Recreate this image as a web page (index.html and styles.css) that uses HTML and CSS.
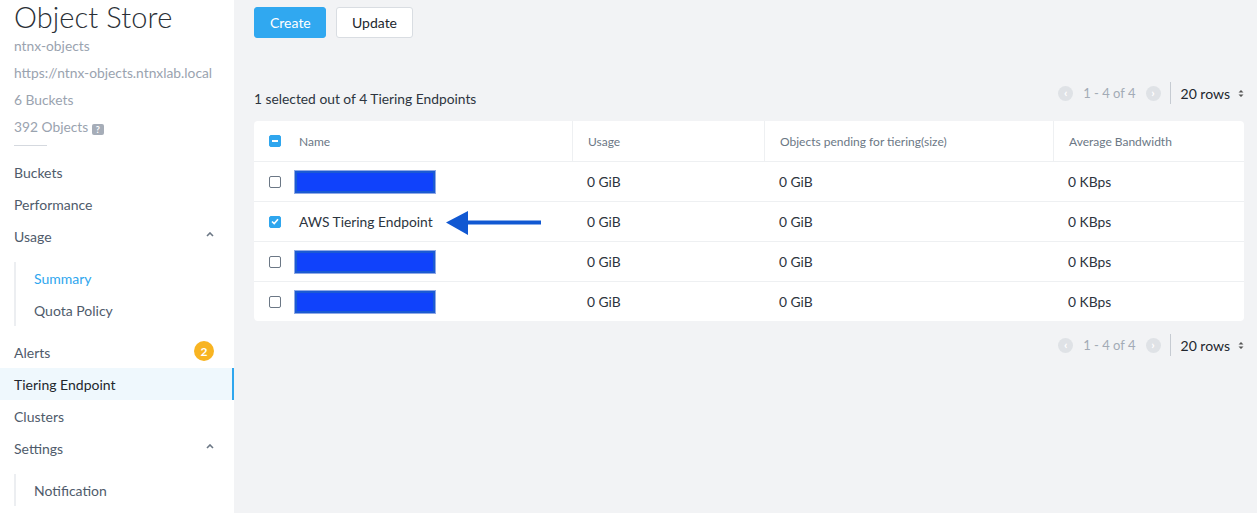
FILE: index.html
```html
<!DOCTYPE html>
<html>
<head>
<meta charset="utf-8">
<link rel="stylesheet" href="styles.css">
</head>
<body>
<div class="app">
  <aside class="sidebar">
    <h1 class="title">Object Store</h1>
    <div class="meta">ntnx-objects</div>
    <div class="meta">https://ntnx-objects.ntnxlab.local</div>
    <div class="meta">6 Buckets</div>
    <div class="meta">392 Objects <span class="help">?</span></div>
    <div class="rule"></div>
    <nav class="nav">
      <div class="nav-item">Buckets</div>
      <div class="nav-item">Performance</div>
      <div class="nav-item">Usage <span class="chev"><svg width="8" height="5" viewBox="0 0 8 5"><path d="M1 4 L4 1 L7 4" fill="none" stroke="#6b7785" stroke-width="1.6"/></svg></span></div>
      <div class="sub">
        <div class="sub-item active-sub">Summary</div>
        <div class="sub-item">Quota Policy</div>
      </div>
      <div class="nav-item">Alerts <span class="badge">2</span></div>
      <div class="nav-item active">Tiering Endpoint</div>
      <div class="nav-item">Clusters</div>
      <div class="nav-item">Settings <span class="chev"><svg width="8" height="5" viewBox="0 0 8 5"><path d="M1 4 L4 1 L7 4" fill="none" stroke="#6b7785" stroke-width="1.6"/></svg></span></div>
      <div class="sub">
        <div class="sub-item">Notification</div>
      </div>
    </nav>
  </aside>
  <main class="main">
    <div class="actions">
      <button class="btn primary">Create</button>
      <button class="btn">Update</button>
    </div>
    <div class="toolbar">
      <div class="count">1 selected out of 4 Tiering Endpoints</div>
      <div class="pager">
        <span class="circ">‹</span>
        <span class="range">1 - 4 of 4</span>
        <span class="circ">›</span>
        <span class="sep"></span>
        <span class="rows">20 rows</span>
        <span class="updown"><svg width="6" height="9" viewBox="0 0 6 9"><path d="M0.5 3.5 L3 1 L5.5 3.5 Z M0.5 5.5 L3 8 L5.5 5.5 Z" fill="#555"/></svg></span>
      </div>
    </div>
    <div class="table">
      <div class="tr head">
        <div class="c c1"><span class="cb checked minus"></span><span>Name</span></div>
        <div class="c c2">Usage</div>
        <div class="c c3">Objects pending for tiering(size)</div>
        <div class="c c4">Average Bandwidth</div>
      </div>
      <div class="tr">
        <div class="c c1"><span class="cb"></span><span class="redact"></span></div>
        <div class="c c2">0 GiB</div>
        <div class="c c3">0 GiB</div>
        <div class="c c4">0 KBps</div>
      </div>
      <div class="tr">
        <div class="c c1"><span class="cb checked"><svg width="8" height="7" viewBox="0 0 8 7"><path d="M1 3.5 L3.2 5.6 L7 1.2" fill="none" stroke="#fff" stroke-width="1.6"/></svg></span><span>AWS Tiering Endpoint</span>
          <svg class="arrow" width="96" height="26" viewBox="0 0 96 26"><path d="M0 12.5 L22 1 L22 10.5 L95 10.5 L95 14.5 L22 14.5 L22 25 Z" fill="#1158d2"/></svg>
        </div>
        <div class="c c2">0 GiB</div>
        <div class="c c3">0 GiB</div>
        <div class="c c4">0 KBps</div>
      </div>
      <div class="tr">
        <div class="c c1"><span class="cb"></span><span class="redact"></span></div>
        <div class="c c2">0 GiB</div>
        <div class="c c3">0 GiB</div>
        <div class="c c4">0 KBps</div>
      </div>
      <div class="tr">
        <div class="c c1"><span class="cb"></span><span class="redact"></span></div>
        <div class="c c2">0 GiB</div>
        <div class="c c3">0 GiB</div>
        <div class="c c4">0 KBps</div>
      </div>
    </div>
    <div class="toolbar bottom">
      <div class="pager">
        <span class="circ">‹</span>
        <span class="range">1 - 4 of 4</span>
        <span class="circ">›</span>
        <span class="sep"></span>
        <span class="rows">20 rows</span>
        <span class="updown"><svg width="6" height="9" viewBox="0 0 6 9"><path d="M0.5 3.5 L3 1 L5.5 3.5 Z M0.5 5.5 L3 8 L5.5 5.5 Z" fill="#555"/></svg></span>
      </div>
    </div>
  </main>
</div>
</body>
</html>
```
FILE: styles.css
```css
* { box-sizing: border-box; }
html, body { margin: 0; padding: 0; }
body {
  font-family: Lato, "Open Sans", "Liberation Sans", sans-serif;
  background: #f2f3f5;
  color: #2d3540;
  width: 1257px;
  height: 513px;
  overflow: hidden;
}
.app { display: flex; height: 513px; }
.sidebar {
  width: 234px;
  flex: none;
  background: #fff;
  overflow: hidden;
}
.title {
  margin: 0;
  padding: 2px 0 0 14px;
  font-weight: 300;
  font-size: 29px;
  line-height: 30px;
  color: #2a2f36;
  letter-spacing: 0.1px;
}
.meta {
  padding-left: 14px;
  font-size: 13.8px;
  line-height: 27px;
  color: #9aa3af;
}
.help {
  display: inline-block;
  width: 12px; height: 11px;
  background: #a6adb8;
  color: #fff;
  font-size: 9px;
  line-height: 11px;
  text-align: center;
  border-radius: 2px;
  font-weight: 700;
  vertical-align: -1px;
}
.rule {
  margin: 5px 0 0 14px;
  width: 33px;
  height: 1px;
  background: #d5d9df;
}
.nav { margin-top: 10px; }
.nav-item {
  height: 32px;
  padding: 0 20px 0 14px;
  display: flex;
  align-items: center;
  justify-content: space-between;
  font-size: 14px;
  color: #4f5b6b;
}
.nav-item.active {
  background: #eff8fd;
  color: #22272e;
  border-right: 2px solid #2fa6ee;
}
.chev { display: flex; align-items: center; margin-top: -4px; }
.badge {
  width: 20px; height: 20px;
  border-radius: 50%;
  background: #f8b422;
  color: #fff;
  font-size: 12px;
  font-weight: 700;
  display: flex; align-items: center; justify-content: center;
  margin-top: -2px;
}
.sub {
  margin: 10px 0 10px 14px;
  border-left: 2px solid #eceef1;
}
.sub-item {
  height: 32px;
  display: flex;
  align-items: center;
  padding-left: 18px;
  font-size: 14px;
  color: #4f5b6b;
}
.sub-item.active-sub { color: #2ea6ee; }

.main { flex: 1; padding: 7px 13px 0 20px; }
.actions { display: flex; gap: 10px; }
.btn {
  font-family: inherit;
  height: 31px;
  padding: 0 15px;
  font-size: 14px;
  border-radius: 3px;
  border: 1px solid #d9dde2;
  background: #fff;
  color: #22272e;
}
.btn.primary {
  background: #30a8f0;
  border-color: #30a8f0;
  color: #fff;
  width: 72px;
}
.toolbar {
  display: flex;
  justify-content: space-between;
  align-items: center;
  margin-top: 40px;
  height: 30px;
}
.count { font-size: 13.8px; color: #2d3540; margin-top: 10px; }
.pager { display: flex; align-items: center; font-size: 14px; }
.circ {
  width: 15px; height: 15px;
  border-radius: 50%;
  background: #dfe2e6;
  color: #fff;
  font-size: 12px;
  font-weight: 700;
  line-height: 14px;
  text-align: center;
}
.range { color: #a3abb6; margin: 0 10px 0 10px; font-size: 13px; }
.sep { width: 1px; height: 22px; background: #c6cbd2; margin: 0 10px 0 9px; }
.rows { color: #22272e; font-size: 14px; }
.updown { margin-left: 8px; display: flex; }

.table {
  margin-top: 13px;
  background: #fff;
  border-radius: 4px;
}
.tr {
  display: flex;
  height: 40px;
  border-top: 1px solid #eef0f2;
}
.tr:first-child { border-top: none; }
.c {
  display: flex;
  align-items: center;
  font-size: 13.8px;
  color: #2d3540;
  padding-left: 15px;
}
.head .c { font-size: 12px; color: #6b7785; }
.head .c + .c { border-left: 1px solid #eef0f2; }
.c1 { width: 318px; position: relative; }
.c2 { width: 192px; }
.c3 { width: 289px; }
.c4 { flex: 1; }
.cb {
  width: 12px; height: 12px;
  border: 1.5px solid #6b7785;
  border-radius: 2px;
  margin-right: 18px;
  flex: none;
  display: flex; align-items: center; justify-content: center;
}
.cb.checked { background: #2fa6ee; border-color: #2fa6ee; }
.cb.minus::after {
  content: "";
  width: 6px; height: 2px;
  background: #fff;
}
.redact {
  width: 142px; height: 24px;
  margin-left: -5px;
  background: #1042fb;
  border: 3px solid #1b5ad3;
  outline: 1px solid #8fa9e6;
  outline-offset: -1px;
}
.arrow { position: absolute; left: 192px; top: 8px; }
.toolbar.bottom { margin-top: 9px; justify-content: flex-end; }
```
